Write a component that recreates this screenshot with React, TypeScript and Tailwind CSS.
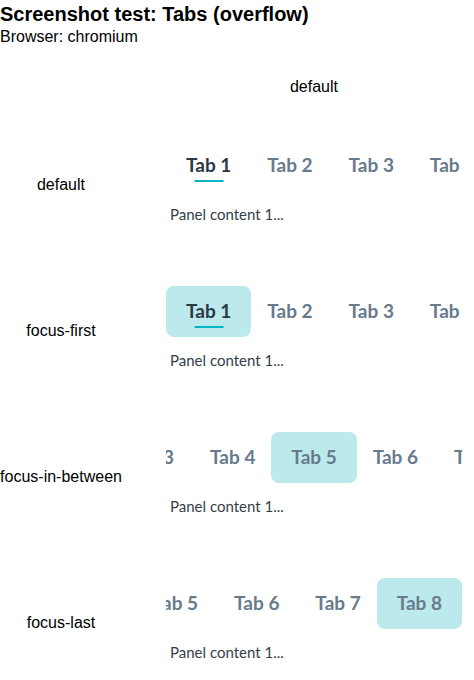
const tabs = ['Tab 1', 'Tab 2', 'Tab 3', 'Tab 4', 'Tab 5', 'Tab 6', 'Tab 7', 'Tab 8'];

type Row = { label: string; focus: number | null; offset: string };

const rows: Row[] = [
  { label: 'default', focus: null, offset: 'ml-0' },
  { label: 'focus-first', focus: 0, offset: 'ml-0' },
  { label: 'focus-in-between', focus: 4, offset: 'ml-[-219.8px]' },
  { label: 'focus-last', focus: 7, offset: 'ml-[-358.4px]' },
];

const TabStrip = ({ focus, offset }: { focus: number | null; offset: string }) => (
  <div className="w-[296px]">
    <div className="h-[51px] overflow-hidden">
      <div className={`flex px-[2px] w-max ${offset}`}>
        {tabs.map((t, i) => {
          const selected = i === 0;
          return (
            <div key={t} className="relative w-[81.3px] h-[51px] shrink-0 flex items-center justify-center">
              {focus === i && (
                <span className="absolute inset-y-0 -left-[2px] -right-[2px] rounded-[8px] bg-[#bbe9ec]"></span>
              )}
              <span
                className={`relative text-[19px] font-bold leading-none -mt-[2px] ${
                  selected ? 'text-[#2b3845]' : 'text-[#687a8b]'
                }`}
              >
                {t}
              </span>
              {selected && (
                <span className="absolute left-1/2 -translate-x-1/2 bottom-[9px] w-[29px] h-[2px] bg-[#00b5c4]"></span>
              )}
            </div>
          );
        })}
      </div>
    </div>
    <div className="pt-[13px] pb-[6px] px-1 text-[15px] leading-[20px] text-[#343e48]">
      Panel content 1...
    </div>
  </div>
);

export default function App() {
  return (
    <div className="min-h-screen bg-white text-black font-['Liberation_Sans',Arial,sans-serif]">
      <h1 className="text-[20px] font-bold leading-[28px]">Screenshot test: Tabs (overflow)</h1>
      <p className="text-[16px] leading-[18px]">Browser: chromium</p>

      <div className="mt-[29px] grid grid-cols-[122px_296px] gap-x-[44px] font-['Lato','Noto_Sans',sans-serif]">
        <div></div>
        <div className="pb-[13px] text-center text-[16px] font-['Liberation_Sans',Arial,sans-serif]">default</div>

        {rows.map((r) => (
          <div key={r.label} className="contents">
            <div className="h-[146px] flex items-center justify-center text-[16px] whitespace-nowrap font-['Liberation_Sans',Arial,sans-serif]">
              {r.label}
            </div>
            <div className="h-[146px] flex items-center">
              <TabStrip focus={r.focus} offset={r.offset} />
            </div>
          </div>
        ))}
      </div>
    </div>
  );
}
